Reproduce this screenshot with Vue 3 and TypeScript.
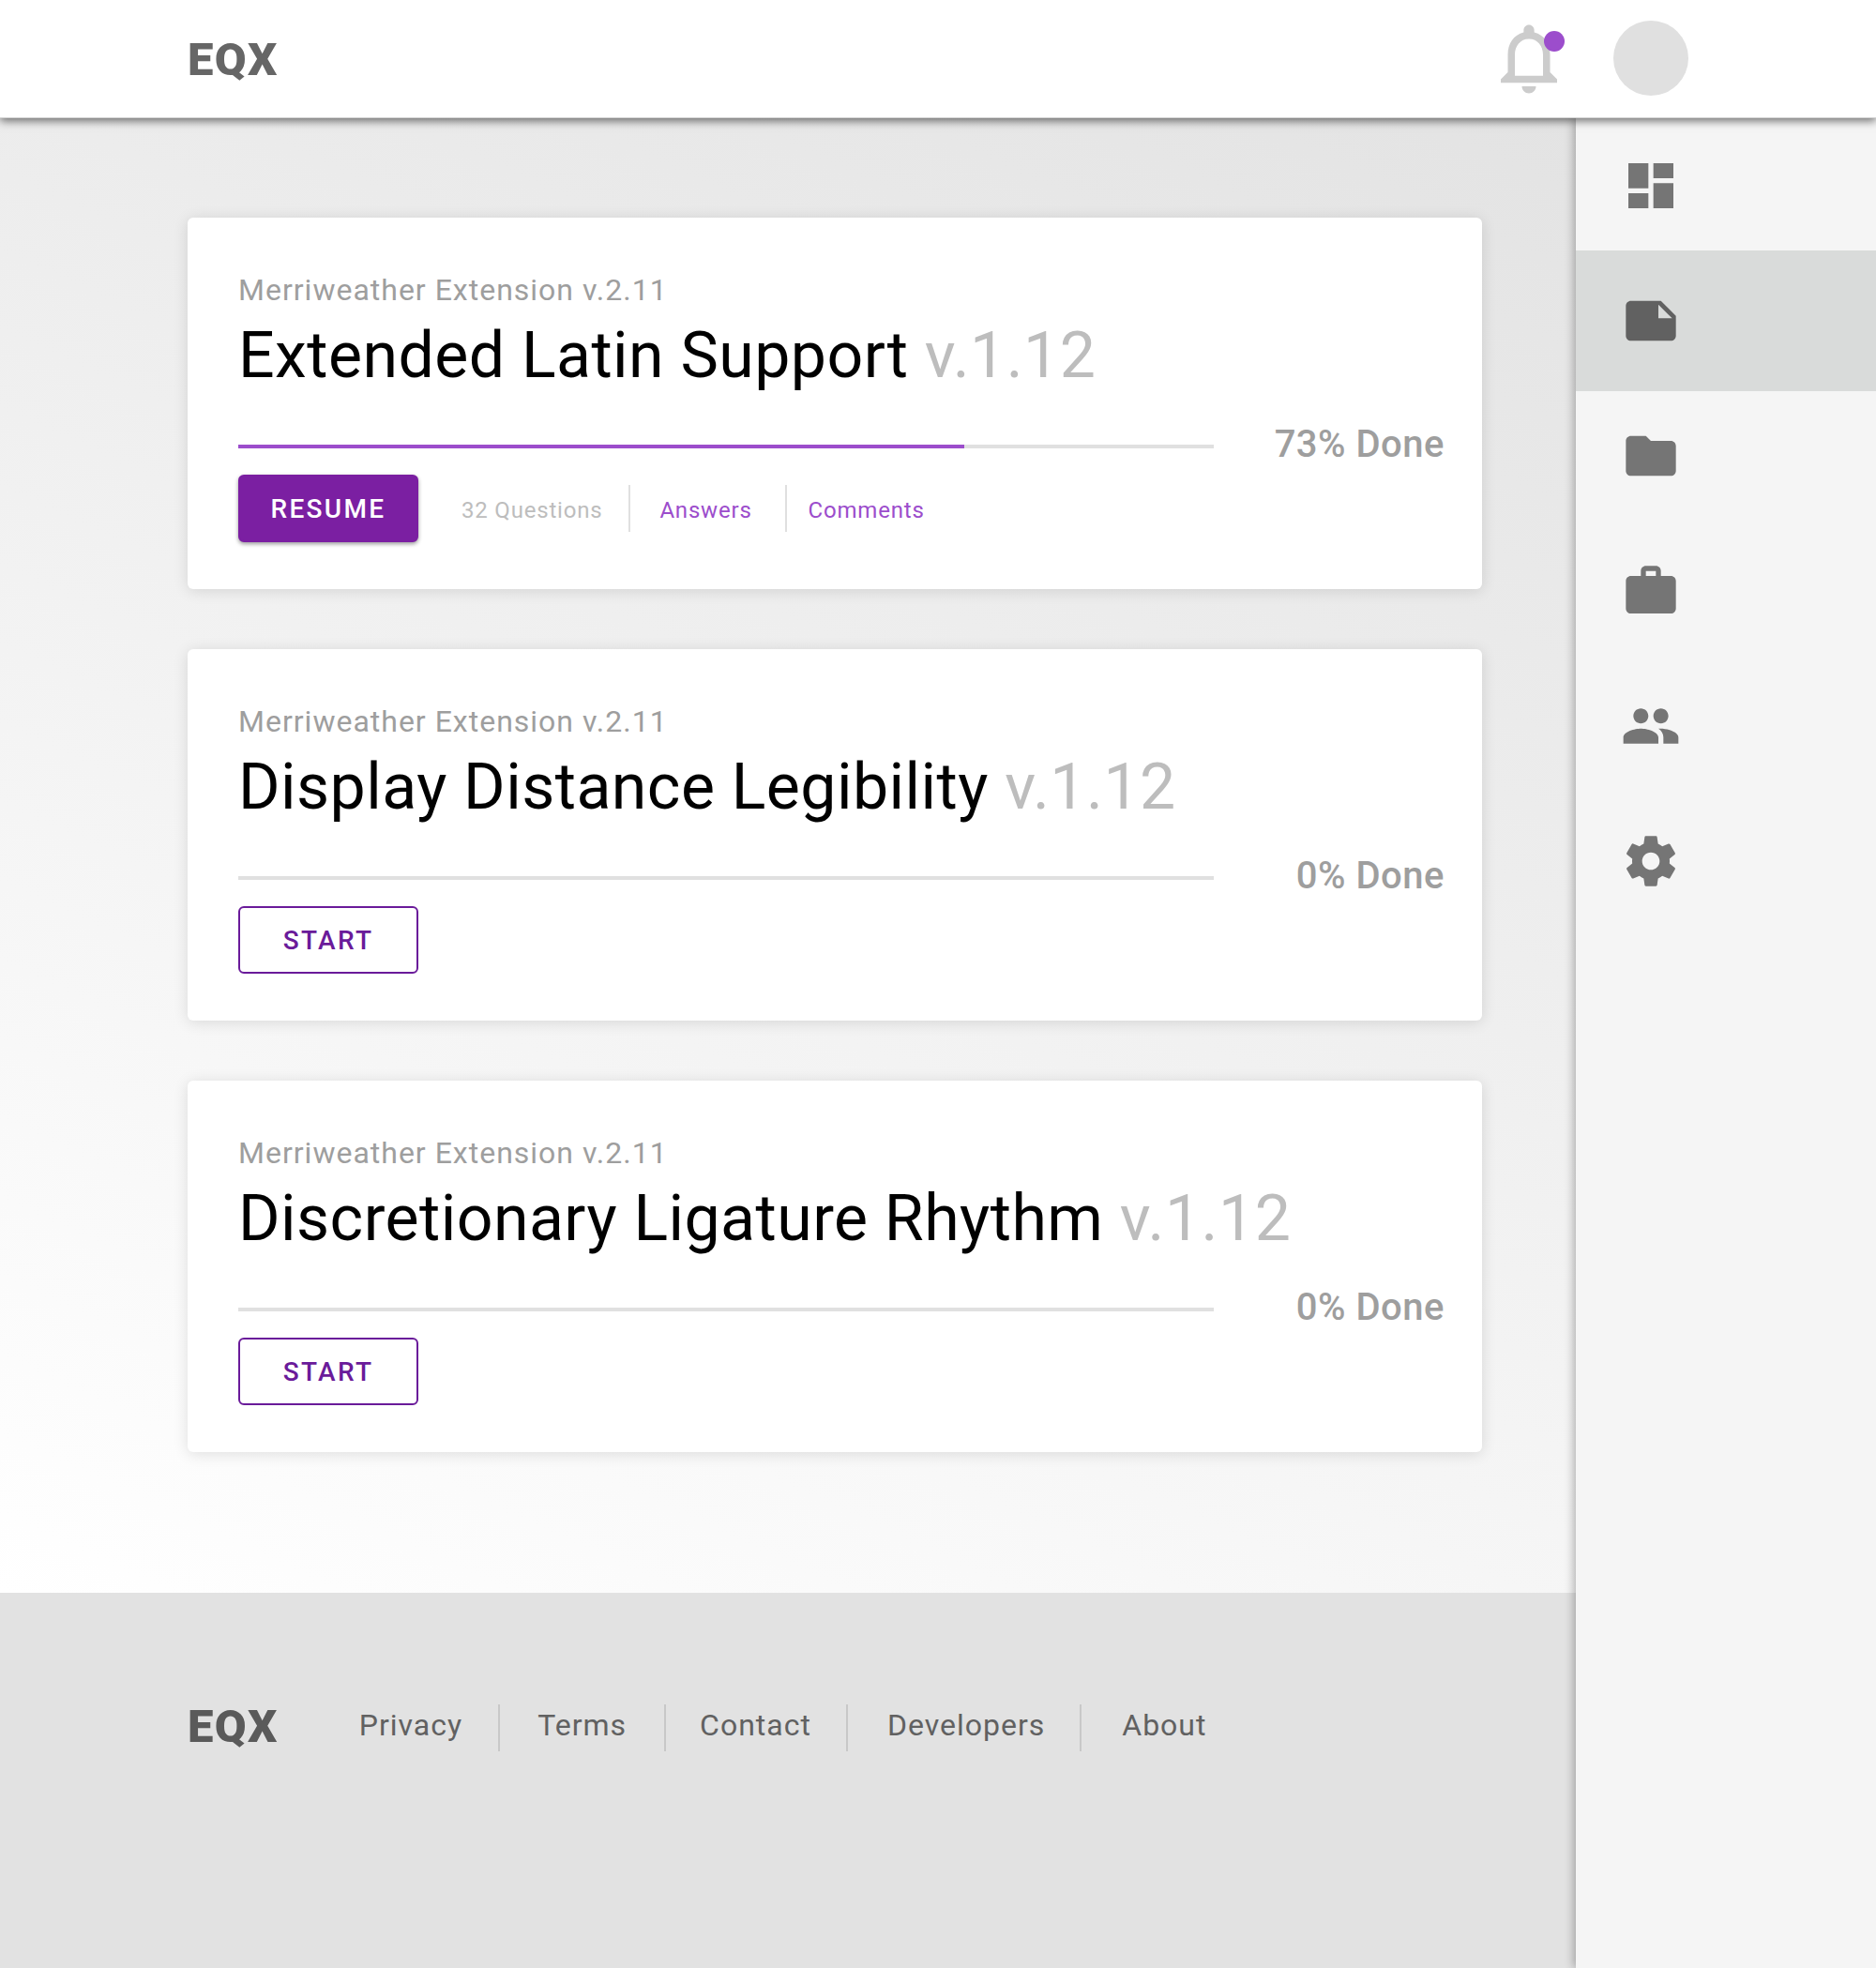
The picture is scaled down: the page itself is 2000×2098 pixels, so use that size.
<script setup lang="ts">
type Course = {
  id: number
  title: string
  percent: number
  fill: number
  action: string
}

const courses: Course[] = [
  { id: 1, title: 'Extended Latin Support', percent: 73, fill: 74.4, action: 'RESUME' },
  { id: 2, title: 'Display Distance Legibility', percent: 0, fill: 0, action: 'START' },
  { id: 3, title: 'Discretionary Ligature Rhythm', percent: 0, fill: 0, action: 'START' },
]

const navIcons = [
  { id: 'dashboard', d: 'M3 13h8V3H3v10zm0 8h8v-6H3v6zm10 0h8V11h-8v10zm0-18v6h8V3h-8z' },
  { id: 'note', d: 'M22 10l-6-6H4c-1.1 0-2 .9-2 2v12.01c0 1.1.9 1.99 2 1.99l16-.01c1.1 0 2-.89 2-1.99v-8zm-7-4.5l5.5 5.5H15V5.5z' },
  { id: 'folder', d: 'M10 4H4c-1.1 0-1.99.9-1.99 2L2 18c0 1.1.9 2 2 2h16c1.1 0 2-.9 2-2V8c0-1.1-.9-2-2-2h-8l-2-2z' },
  { id: 'work', d: 'M20 6h-4V4c0-1.11-.89-2-2-2h-4c-1.11 0-2 .89-2 2v2H4c-1.11 0-1.99.89-1.99 2L2 19c0 1.11.89 2 2 2h16c1.11 0 2-.89 2-2V8c0-1.11-.89-2-2-2zm-6 0h-4V4h4v2z' },
  { id: 'people', d: 'M16 11c1.66 0 2.99-1.34 2.99-3S17.66 5 16 5c-1.66 0-3 1.34-3 3s1.34 3 3 3zm-8 0c1.66 0 2.99-1.34 2.99-3S9.66 5 8 5C6.34 5 5 6.34 5 8s1.34 3 3 3zm0 2c-2.33 0-7 1.17-7 3.5V19h14v-2.5c0-2.33-4.67-3.5-7-3.5zm8 0c-.29 0-.62.02-.97.05 1.16.84 1.97 1.97 1.97 3.45V19h6v-2.5c0-2.33-4.67-3.5-7-3.5z' },
  { id: 'settings', d: 'M19.43 12.98c.04-.32.07-.64.07-.98s-.03-.66-.07-.98l2.11-1.65c.19-.15.24-.42.12-.64l-2-3.46c-.12-.22-.39-.3-.61-.22l-2.49 1c-.52-.4-1.08-.73-1.69-.98l-.38-2.65C14.46 2.18 14.25 2 14 2h-4c-.25 0-.46.18-.49.42l-.38 2.65c-.61.25-1.17.59-1.69.98l-2.49-1c-.23-.09-.49 0-.61.22l-2 3.46c-.13.22-.07.49.12.64l2.11 1.65c-.04.32-.07.65-.07.98s.03.66.07.98l-2.11 1.65c-.19.15-.24.42-.12.64l2 3.46c.12.22.39.3.61.22l2.49-1c.52.4 1.08.73 1.69.98l.38 2.65c.03.24.24.42.49.42h4c.25 0 .46-.18.49-.42l.38-2.65c.61-.25 1.17-.59 1.69-.98l2.49 1c.23.09.49 0 .61-.22l2-3.46c.12-.22.07-.49-.12-.64l-2.11-1.65zM12 15.5c-1.93 0-3.5-1.57-3.5-3.5s1.57-3.5 3.5-3.5 3.5 1.57 3.5 3.5-1.57 3.5-3.5 3.5z' },
]

const footerLinks = ['Privacy', 'Terms', 'Contact', 'Developers', 'About']
</script>

<template>
  <div class="app">
    <header class="topbar">
      <div class="logo top">EQX</div>
      <div class="topbar-right">
        <div class="bell">
          <svg viewBox="0 0 24 24" width="90" height="90">
            <path d="M12 22c1.1 0 2-.9 2-2h-4c0 1.1.9 2 2 2zm6-6v-5c0-3.07-1.63-5.64-4.5-6.32V4c0-.83-.67-1.5-1.5-1.5s-1.5.67-1.5 1.5v.68C7.64 5.36 6 7.92 6 11v5l-2 2v1h16v-1l-2-2zm-2 1H8v-6c0-2.48 1.51-4.5 4-4.5s4 2.02 4 4.5v6z" />
          </svg>
          <span class="dot"></span>
        </div>
        <div class="avatar"></div>
      </div>
    </header>

    <div class="body">
      <div class="content">
        <main class="main">
          <section v-for="course in courses" :key="course.id" class="card">
            <p class="subtitle">Merriweather Extension v.2.11</p>
            <h2 class="title">{{ course.title }} <span class="version">v.1.12</span></h2>

            <div class="progress-row">
              <div class="track">
                <div class="fill" :style="{ width: course.fill + '%' }"></div>
              </div>
              <span class="done">{{ course.percent }}% Done</span>
            </div>

            <div class="actions">
              <button class="btn" :class="{ outline: course.percent === 0 }">{{ course.action }}</button>
              <ul v-if="course.percent > 0" class="meta">
                <li class="muted">32 Questions</li>
                <li class="link">Answers</li>
                <li class="link">Comments</li>
              </ul>
            </div>
          </section>
        </main>

        <footer class="footer">
          <div class="logo dark">EQX</div>
          <nav class="footer-links">
            <a v-for="link in footerLinks" :key="link">{{ link }}</a>
          </nav>
        </footer>
      </div>

      <aside class="sidebar">
        <div
          v-for="icon in navIcons"
          :key="icon.id"
          class="nav-item"
          :class="{ active: icon.id === 'note' }"
        >
          <svg viewBox="0 0 24 24" width="64" height="64"><path :d="icon.d" /></svg>
        </div>
      </aside>
    </div>
  </div>
</template>

<style>
html,
body {
  margin: 0;
  background: #f5f5f5;
}
</style>

<style scoped>
.app {
  width: 2000px;
  height: 2098px;
  overflow: hidden;
  display: flex;
  flex-direction: column;
  font-family: Roboto, "Liberation Sans", sans-serif;
}

.topbar {
  position: relative;
  z-index: 3;
  height: 125px;
  flex: none;
  box-sizing: border-box;
  padding: 0 200px 1px;
  background: #fff;
  display: flex;
  align-items: center;
  justify-content: space-between;
  box-shadow: 0 1px 0 #d4d4d4, 0 4px 9px rgba(0, 0, 0, 0.55);
}

.logo {
  font-size: 49px;
  line-height: 60px;
  font-weight: 900;
  letter-spacing: 1.4px;
  color: #666;
}

.logo.top {
  margin-top: 3px;
}

.logo.dark {
  color: #5a5a5a;
}

.topbar-right {
  display: flex;
  align-items: center;
  gap: 45px;
}

.bell {
  position: relative;
  width: 90px;
  height: 90px;
}

.bell svg {
  display: block;
  fill: #ccc;
}

.dot {
  position: absolute;
  left: 61px;
  top: 16px;
  width: 22px;
  height: 22px;
  border-radius: 50%;
  background: #9c4dcc;
}

.avatar {
  width: 80px;
  height: 80px;
  border-radius: 50%;
  background: #e0e0e0;
}

.body {
  flex: 1;
  display: flex;
  min-height: 0;
}

.content {
  width: 1680px;
  display: flex;
  flex-direction: column;
}

.main {
  flex: 1;
  padding: 107px 100px 0 200px;
  display: flex;
  flex-direction: column;
  gap: 64px;
  background: linear-gradient(205deg, #e3e3e3, #fff);
}

.card {
  height: 396px;
  box-sizing: border-box;
  padding: 57px 40px 0 54px;
  background: #fff;
  border-radius: 6px;
  box-shadow: 0 2px 16px rgba(0, 0, 0, 0.12);
}

.subtitle {
  margin: 0;
  font-size: 32px;
  line-height: 40px;
  letter-spacing: 1px;
  color: #9e9e9e;
}

.title {
  margin: 0;
  font-size: 68px;
  line-height: 100px;
  font-weight: 400;
  letter-spacing: 0.45px;
  color: #000;
  white-space: nowrap;
}

.version {
  color: #bdbdbd;
}

.progress-row {
  margin-top: 22px;
  height: 50px;
  display: flex;
  align-items: center;
  justify-content: space-between;
}

.track {
  width: 1040px;
  height: 4px;
  background: #e0e0e0;
}

.fill {
  height: 100%;
  background: #9c4dcc;
}

.done {
  margin-bottom: 6px;
  font-size: 40px;
  font-weight: 500;
  letter-spacing: 0.5px;
  color: #9e9e9e;
}

.actions {
  margin-top: 5px;
  display: flex;
  align-items: center;
}

.btn {
  width: 192px;
  height: 72px;
  box-sizing: border-box;
  padding: 0;
  border: 2px solid #7b1fa2;
  border-radius: 6px;
  background: #7b1fa2;
  color: #fff;
  font-family: inherit;
  font-size: 28px;
  font-weight: 500;
  letter-spacing: 2.3px;
  box-shadow: 0 2px 4px rgba(0, 0, 0, 0.4);
}

.btn.outline {
  background: #fff;
  color: #6a1b9a;
  border-color: #6a1b9a;
  box-shadow: none;
}

.meta {
  list-style: none;
  margin: 0 0 0 46px;
  padding: 0;
  display: flex;
  font-size: 24px;
  letter-spacing: 0.8px;
}

.meta li {
  height: 50px;
  line-height: 54px;
  white-space: nowrap;
}

.meta li + li {
  margin-left: 28px;
  padding-left: 31px;
  border-left: 2px solid #e0e0e0;
}

.meta li:last-child {
  margin-left: 35px;
  padding-left: 23px;
}

.muted {
  color: #bdbdbd;
}

.link {
  color: #9c4dcc;
}

.footer {
  height: 400px;
  flex: none;
  box-sizing: border-box;
  padding: 113px 0 0 200px;
  background: #e2e2e2;
  display: flex;
  align-items: flex-start;
}

.footer-links {
  display: flex;
  margin-left: 86px;
  margin-top: 6px;
}

.footer-links a {
  height: 50px;
  line-height: 44px;
  font-size: 32px;
  letter-spacing: 1px;
  color: #616161;
  padding-right: 38px;
}

.footer-links a + a {
  border-left: 2px solid #c8c8c8;
  padding-left: 40px;
}

.footer-links a:nth-child(2) {
  padding-right: 40px;
}

.footer-links a:nth-child(3) {
  padding-left: 36px;
  padding-right: 37px;
}

.footer-links a:nth-child(4) {
  padding-left: 42px;
  padding-right: 37px;
}

.footer-links a:nth-child(5) {
  padding-left: 43px;
}

.sidebar {
  position: relative;
  z-index: 2;
  width: 320px;
  box-sizing: border-box;
  padding-top: 1px;
  background: #f5f5f5;
  display: flex;
  flex-direction: column;
  box-shadow: -2px 0 10px rgba(0, 0, 0, 0.3);
}

.nav-item {
  height: 144px;
  flex: none;
  padding-left: 48px;
  display: flex;
  align-items: center;
}

.nav-item svg {
  fill: #757575;
}

.nav-item.active {
  height: 150px;
  margin: -3px 0;
  background: #d9dbda;
}

.nav-item.active svg {
  fill: #616161;
}
</style>
